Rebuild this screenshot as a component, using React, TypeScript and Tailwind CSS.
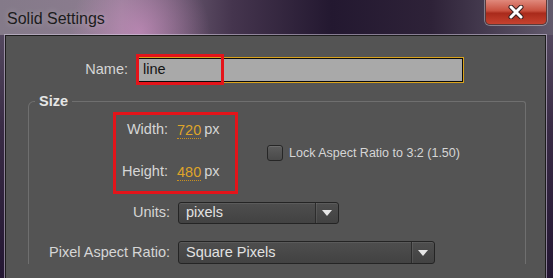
import React from 'react';

function Dropdown({ value, width, height }: { value: string; width: string; height: string }) {
  return (
    <div
      className={`${width} ${height} flex items-center rounded-[3px] border border-[#242424] bg-[linear-gradient(180deg,#4e4e4e,#424242)] shadow-[inset_0_1px_0_rgba(255,255,255,0.08)]`}
    >
      <span className="flex-1 pl-[7px] text-[14.5px] text-[#e2e2e2]">{value}</span>
      <div className="h-full w-px bg-[#2c2c2c] shadow-[1px_0_0_rgba(255,255,255,0.08)]" />
      <div className="w-[22px] flex justify-center">
        <svg width="10" height="6" viewBox="0 0 10 6">
          <path d="M0 0h10L5 6z" fill="#e6e6e6" />
        </svg>
      </div>
    </div>
  );
}

export default function App() {
  return (
    <div
      className="w-[553px] h-[278px] overflow-hidden flex flex-col bg-[linear-gradient(180deg,#5d5268_0%,#3a2c46_45%,#241733_100%)]"
      style={{ fontFamily: '"Liberation Sans", Arial, sans-serif' }}
    >
      {/* Title bar */}
      <div className="h-[35px] shrink-0 flex items-start justify-between bg-[radial-gradient(circle_at_140px_32px,rgba(225,150,210,0.55),transparent_70px),linear-gradient(90deg,#847a89_0%,#8d7c90_22%,#45354e_42%,#231830_60%,#2e2238_78%,#625a6c_100%)]">
        <span className="pl-[7px] pt-[7px] text-[16px] text-[#1c1c1c] [text-shadow:0_0_6px_rgba(255,255,255,0.35)]">
          Solid Settings
        </span>
        <button className="mr-[6px] w-[62px] h-[25px] flex items-center justify-center rounded-b-[5px] border border-t-0 border-[#5a3a3a] bg-[linear-gradient(180deg,#e0897c_0%,#c8503f_45%,#a92a1b_55%,#c6422f_100%)] shadow-[0_0_0_1px_rgba(255,255,255,0.35)]">
          <svg width="18" height="14" viewBox="0 0 18 14">
            <path d="M4 2l10 10M14 2L4 12" stroke="#3a2020" strokeWidth="5" strokeLinecap="round" />
            <path d="M4 2l10 10M14 2L4 12" stroke="#ffffff" strokeWidth="3" strokeLinecap="round" />
          </svg>
        </button>
      </div>

      {/* Body */}
      <div className="flex-1 flex pl-[5px] pr-[7px]">
        <div className="flex-1 bg-[#545454] border border-b-0 border-[#1c1c1c] shadow-[0_0_0_1px_rgba(215,205,225,0.55)]">
          {/* Name */}
          <div className="mt-[21px] flex items-center">
            <span className="w-[122px] text-right text-[14.5px] text-[#d6d6d6]">Name:</span>
            <div className="relative ml-[9px] w-[327px] h-[26px] flex items-center border border-[#d9a21b] bg-[#a9a9a9] shadow-[inset_0_0_0_1px_#0a0a0a]">
              <span className="pl-[5px] text-[14.5px] text-[#141414]">line</span>
              <div className="absolute left-[-2px] top-[-4px] w-[88px] h-[31px] border-[3px] border-[#e4141a]" />
            </div>
          </div>

          {/* Size group */}
          <fieldset className="mt-[10px] ml-[22px] mr-[19px] border border-b-0 border-[#6f6f6f] rounded-tl-[6px] rounded-tr-[3px]">
            <legend className="ml-[6px] px-[4px] text-[14.5px] font-bold text-[#e6e6e6] leading-[16px]">Size</legend>

            <div className="mt-[3px] flex items-center">
              <div className="ml-[84px] w-[125px] h-[82px] border-[3px] border-[#e4141a] flex flex-col gap-[22px] pt-[5px]">
                <div className="h-[20px] flex items-center">
                  <span className="w-[52px] text-right text-[14.5px] text-[#d6d6d6]">Width:</span>
                  <span className="ml-[9px] text-[14.5px] text-[#dea42a] border-b border-dotted border-[#c9911f] leading-[16px]">720</span>
                  <span className="ml-[3px] text-[14.5px] text-[#d6d6d6]">px</span>
                </div>
                <div className="h-[20px] flex items-center">
                  <span className="w-[52px] text-right text-[14.5px] text-[#d6d6d6]">Height:</span>
                  <span className="ml-[9px] text-[14.5px] text-[#dea42a] border-b border-dotted border-[#c9911f] leading-[16px]">480</span>
                  <span className="ml-[3px] text-[14.5px] text-[#d6d6d6]">px</span>
                </div>
              </div>

              <label className="ml-[29px] flex items-center gap-[6px]">
                <span className="w-[16px] h-[16px] rounded-[3px] border border-[#262626] bg-[linear-gradient(180deg,#5c5c5c,#4a4a4a)] shadow-[inset_0_1px_0_rgba(255,255,255,0.1)]" />
                <span className="text-[12.5px] text-[#d6d6d6]">Lock Aspect Ratio to 3:2 (1.50)</span>
              </label>
            </div>

            <div className="mt-[8px] grid grid-cols-[141px_1fr] gap-x-[8px] gap-y-[17px] items-center">
              <span className="text-right text-[14.5px] text-[#d6d6d6]">Units:</span>
              <Dropdown value="pixels" width="w-[161px]" height="h-[22px]" />
              <span className="text-right text-[14.5px] text-[#d6d6d6]">Pixel Aspect Ratio:</span>
              <Dropdown value="Square Pixels" width="w-[257px]" height="h-[23px]" />
            </div>
          </fieldset>
        </div>
      </div>
    </div>
  );
}
